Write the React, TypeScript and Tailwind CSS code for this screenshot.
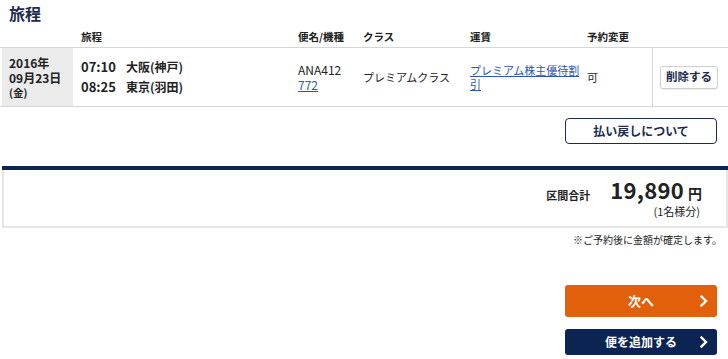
const FONT = { fontFamily: '"Noto Sans CJK JP", "Noto Sans", sans-serif' };

function Chevron() {
  return (
    <svg width="8" height="12" viewBox="0 0 8 12" className="absolute right-[9px] top-1/2 -translate-y-1/2">
      <path d="M1.5 1.5 L6 6 L1.5 10.5" fill="none" stroke="white" strokeWidth="2.4" strokeLinecap="square" />
    </svg>
  );
}

export default function App() {
  return (
    <div className="w-[728px] h-[359px] overflow-hidden bg-white text-[#222]" style={FONT}>
      {/* Title */}
      <h1 className="h-[28px] pl-[9px] pt-[2px] text-[16px] font-bold leading-[22px] text-[#1c2b4e]">旅程</h1>

      {/* Table header */}
      <div className="flex h-[19px] items-center text-[10.5px] font-bold leading-none">
        <div className="w-[81px]" />
        <div className="w-[217px]">旅程</div>
        <div className="w-[65px]">便名/機種</div>
        <div className="w-[107px]">クラス</div>
        <div className="w-[117px]">運賃</div>
        <div>予約変更</div>
      </div>

      {/* Row */}
      <div className="flex h-[60px] border-y border-[#d6d6d6]">
        <div className="ml-[2px] flex w-[71px] flex-col justify-center bg-[#ebebeb] pl-[7px] font-bold">
          <div className="text-[12px] leading-[15px]">2016年</div>
          <div className="text-[12px] leading-[15px]">09月23日</div>
          <div className="text-[10.5px] leading-[15px]">(金)</div>
        </div>
        <div className="flex w-[225px] flex-col justify-center gap-[4px] pl-[8px] font-bold leading-[16px]">
          <div className="flex items-baseline">
            <span className="w-[45px] text-[13px]">07:10</span>
            <span className="text-[12px]">大阪(神戸)</span>
          </div>
          <div className="flex items-baseline">
            <span className="w-[45px] text-[13px]">08:25</span>
            <span className="text-[12px]">東京(羽田)</span>
          </div>
        </div>
        <div className="flex w-[65px] flex-col justify-center text-[12px] leading-[15px]">
          <span>ANA412</span>
          <a className="text-[#2a56b4] underline">772</a>
        </div>
        <div className="flex w-[107px] items-center text-[11px]">プレミアムクラス</div>
        <div className="flex w-[117px] items-center pr-[6px] text-[11px] leading-[14px]">
          <a className="text-[#2a56b4] underline">プレミアム株主優待割引</a>
        </div>
        <div className="flex w-[65px] items-center text-[11px]">可</div>
        <div className="flex flex-1 items-center border-l border-[#d6d6d6] pl-[7px]">
          <button className="h-[23px] w-[58px] rounded-[3px] border border-[#cfcfcf] bg-white text-[11.5px] font-bold text-[#1c2b4e] shadow-[0_1px_1px_rgba(0,0,0,0.08)]">
            削除する
          </button>
        </div>
      </div>

      {/* Refund */}
      <div className="flex justify-end pr-[11px] pt-[11px]">
        <button className="h-[26px] w-[152px] rounded-[4px] border border-[#1c2b4e] bg-white text-[12px] font-bold text-[#1c2b4e]">
          払い戻しについて
        </button>
      </div>

      {/* Total */}
      <div className="ml-[2px] mt-[22px] border-t-[4px] border-[#0c2452]">
        <div className="flex h-[58px] items-start justify-end border-x-2 border-b-2 border-[#e6e6e6] pr-[24px] pt-[5px]">
          <div className="mr-[20px] mt-[12px] text-[11px] font-bold">区間合計</div>
          <div className="flex flex-col items-end">
            <div className="flex items-baseline font-bold">
              <span className="text-[22px] leading-[28px] tracking-[0.3px]">19,890</span>
              <span className="ml-[4px] text-[14px]">円</span>
            </div>
            <div className="mr-[2px] text-[11px] leading-[14px]">(1名様分)</div>
          </div>
        </div>
      </div>

      <p className="pr-[6px] pt-[5px] text-right text-[10px] leading-[14px]">※ご予約後に金額が確定します。</p>

      {/* Actions */}
      <div className="flex flex-col items-end gap-[12px] pr-[11px] pt-[38px]">
        <button className="relative h-[32px] w-[152px] rounded-[3px] bg-[#e25f0b] text-[13px] font-bold text-white">
          次へ
          <Chevron />
        </button>
        <button className="relative h-[26px] w-[152px] rounded-[3px] bg-[#0c2452] text-[12px] font-bold text-white">
          便を追加する
          <Chevron />
        </button>
      </div>
    </div>
  );
}
